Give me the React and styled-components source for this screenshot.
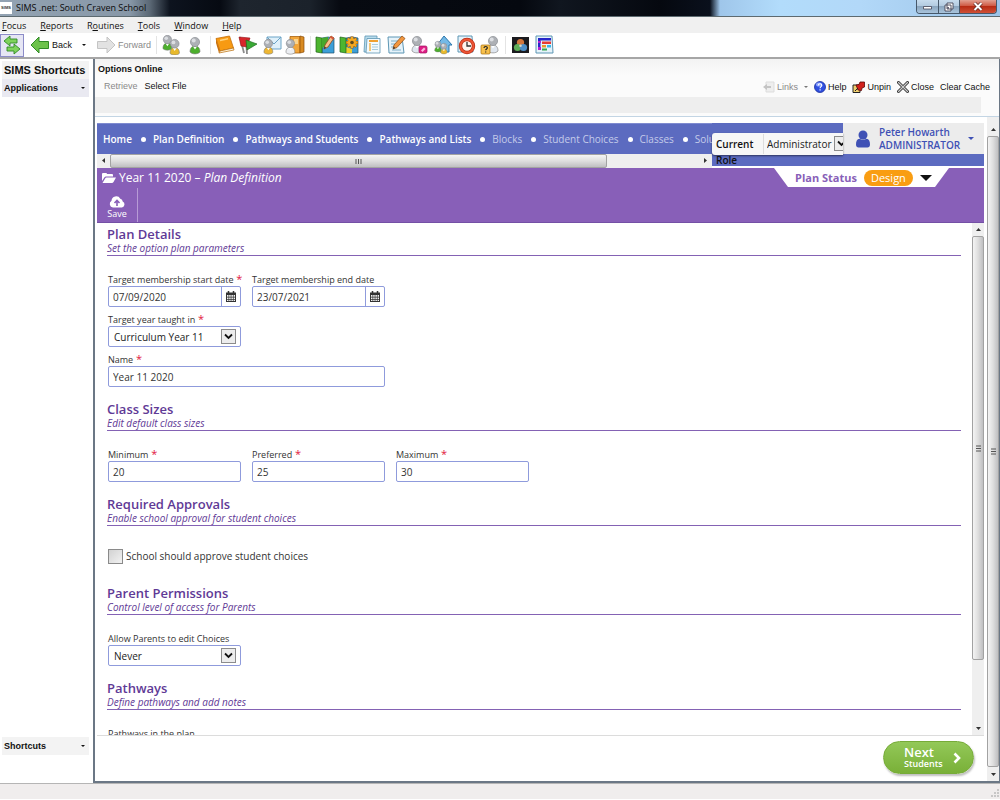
import React from "react";
import styled, { createGlobalStyle, css } from "styled-components";

const GlobalStyle = createGlobalStyle`
  *, *::before, *::after { box-sizing: border-box; }
  html, body { margin: 0; padding: 0; background: #fff; }
  button, input, select { font: inherit; color: inherit; margin: 0; }
  button { background: none; border: 0; padding: 0; cursor: pointer; }
  h1, h2, p { margin: 0; font-weight: inherit; font-size: inherit; }
  svg { flex: none; }
`;

const purple = "#885fb8";
const heading = "#5f3a96";
const indigo = "#5c6bc0";

const Window = styled.div`
  display: flex;
  flex-direction: column;
  height: 100vh;
  min-height: 480px;
  overflow: hidden;
  font: 9px/12px "Liberation Sans", Arial, sans-serif;
  color: #111;
`;

/* Window chrome */
const TitleBar = styled.header`
  display: flex;
  align-items: center;
  flex: none;
  height: 17px;
  padding-right: 3px;
  border-bottom: 1px solid #5d6a70;
  background: linear-gradient(90deg, #93a3b3 0, #8797a7 130px, #5b6875 150px, #0d131e 170px, #060a12 220px, #1e252e 240px, #1b222b 310px, #070a11 340px, #05080f 52%, #10161f 56%, #05080f 66%, #0a101c 71%, #9fc6ea 72%, #b2dcfb 78%, #b2d8f8 86%, #9dc4e8 100%);
`;
const AppBadge = styled.span`
  width: 12px;
  height: 12px;
  background: #fff;
  color: #333;
  font-size: 4px;
  line-height: 12px;
  font-weight: bold;
  text-align: center;
`;
const WindowTitle = styled.h1`
  flex: 1;
  padding-left: 4px;
  font: 9px/14px "Open Sans", sans-serif;
  color: #0a0a0a;
`;
const WindowButtons = styled.div`
  display: flex;
  align-self: flex-start;
  height: 14px;
  border: 1px solid #46586a;
  border-top: 0;
  border-radius: 0 0 4px 4px;
  overflow: hidden;
`;
const WindowButton = styled.button`
  display: grid;
  place-items: center;
  width: ${(p) => (p.$close ? 37 : 21)}px;
  background: ${(p) =>
    p.$close
      ? "linear-gradient(#e2a091, #cf5a44 45%, #b82c14 50%, #cf5037)"
      : "linear-gradient(#c7dcee, #b3cbe0 45%, #8ba6bf 50%, #a9c4dc)"};
  &:not(:first-child) { border-left: 1px solid #46586a; }
`;
const MenuBar = styled.nav`
  display: flex;
  flex: none;
  height: 16px;
  padding-left: 2px;
  gap: 14px;
  background: #f0f0f0;
`;
const MenuItem = styled.button`
  line-height: 17px;
  font-family: "Open Sans", sans-serif;
`;
const Toolbar = styled.div`
  display: flex;
  align-items: center;
  flex: none;
  height: 26px;
  border-bottom: 2px solid #a6a6a6;
  background: #fff;
`;
const ToolButton = styled.button`
  display: flex;
  align-items: center;
  flex: none;
  gap: 2px;
  color: ${(p) => (p.$muted ? "#8a8a8a" : "#111")};
  svg { display: block; }
`;
const ToggleButton = styled(ToolButton)`
  justify-content: center;
  width: 24px;
  height: 23px;
  margin-right: 6px;
  border: 1px solid #8c8cc8;
  background: #e6e6f4;
`;
const CaretButton = styled(ToolButton)`
  justify-content: center;
  width: 24px;
`;
const IconGroup = styled.div`
  display: flex;
  justify-content: space-between;
  flex: none;
  width: ${(p) => p.$width}px;
`;
const Divider = styled.span`
  flex: none;
  width: 1px;
  height: 18px;
  margin: 0 4px 0 5px;
  background: #e4e4e4;
`;
const Caret = styled.span`
  display: inline-block;
  flex: none;
  border: solid transparent;
  border-width: ${(p) => p.$size || 2}px ${(p) => p.$size || 2}px 0;
  border-top-color: ${(p) => p.$color || "#111"};
`;

/* Sidebar and workspace */
const Body = styled.div`
  display: flex;
  flex: 1;
  min-height: 0;
`;
const Sidebar = styled.aside`
  display: flex;
  flex-direction: column;
  flex: none;
  width: 93px;
  padding: 2px 4px 28px 2px;
`;
const SidebarTitle = styled.h2`
  height: 18px;
  padding-left: 2px;
  background: #f3f3f3;
  font-size: 11px;
  line-height: 19px;
  font-weight: bold;
  white-space: nowrap;
`;
const SidebarButton = styled.button`
  display: flex;
  align-items: center;
  justify-content: space-between;
  height: 18px;
  padding: 0 4px 0 2px;
  background: ${(p) => (p.$active ? "#e9e9f1" : "#f3f3f3")};
  font-weight: bold;
  ${(p) => p.$last && css`margin-top: auto;`}
`;
const Workspace = styled.main`
  display: flex;
  flex-direction: column;
  flex: 1;
  min-width: 0;
  border-left: 2px solid #6b7785;
  border-bottom: 2px solid #6b7785;
  border-right: 1px solid #6b7785;
`;
const WorkspaceHead = styled.div`
  flex: none;
  padding: 4px 9px 0 3px;
  height: 58px;
  background: linear-gradient(#f3f3f3, #fbfbfb 16px);
  border-bottom: 1px solid #c3d5e4;
`;
const WorkspaceTitle = styled.h2`
  font-weight: bold;
`;
const Actions = styled.div`
  display: flex;
  align-items: center;
  height: 22px;
  padding-left: 6px;
  gap: 7px;
`;
const ActionsEnd = styled.div`
  display: flex;
  align-items: center;
  gap: 6px;
  margin-left: auto;
  padding-top: 2px;
`;
const GreyBand = styled.div`
  height: 16px;
  margin: 0 9px 0 -3px;
  background: #eee;
`;
const Browser = styled.div`
  display: flex;
  flex: 1;
  min-height: 0;
`;
const Page = styled.div`
  display: flex;
  flex-direction: column;
  flex: 1;
  min-width: 0;
  margin: 6px 3px 2px 2px;
  font-family: "Open Sans", sans-serif;
`;

/* Scroll bars */
const Track = styled.div`
  display: flex;
  flex: none;
  flex-direction: ${(p) => (p.$across ? "row" : "column")};
  align-items: stretch;
  ${(p) => (p.$across ? "height: 14px;" : "width: 12px;")}
  padding-top: ${(p) => (p.$inset ? 6 : 0)}px;
  background: #efefef;
`;
const TrackEnd = styled.span`
  display: grid;
  place-items: center;
  flex: none;
  width: 13px;
  height: 13px;
`;
const Thumb = styled.span`
  display: grid;
  place-items: center;
  flex: ${(p) => p.$share} 1 0;
  border: 1px solid #a2a2a2;
  border-radius: 2px;
  background: linear-gradient(${(p) => (p.$across ? "180deg" : "90deg")}, #f4f4f4, #dedede 50%, #bfbfc1);
`;
const Spare = styled.span`
  flex: ${(p) => p.$share} 1 0;
`;

/* Page header */
const PageHead = styled.div`
  display: flex;
  flex: none;
  height: 45px;
`;
const NavSide = styled.div`
  flex: 1;
  min-width: 0;
`;
const NavList = styled.nav`
  display: flex;
  align-items: center;
  height: 31px;
  padding-left: 6px;
  overflow: hidden;
  background: ${indigo};
  border-top: 1px solid #7f8bd0;
`;
const NavLink = styled.a`
  flex: none;
  color: ${(p) => (p.$dim ? "#c5cbea" : "#fff")};
  font-size: 10px;
  line-height: 16px;
  font-weight: ${(p) => (p.$dim ? 400 : 600)};
  text-decoration: none;
  white-space: nowrap;
  &:not(:first-child)::before {
    content: "";
    display: inline-block;
    width: 5px;
    height: 5px;
    margin: 0 7px 1px 9px;
    border-radius: 50%;
    background: #fff;
  }
`;
const UserSide = styled.div`
  position: relative;
  display: flex;
  flex-direction: column;
  flex: none;
  width: 272px;
  height: 43px;
  background: ${indigo};
`;
const UserMenu = styled.button`
  display: flex;
  align-items: center;
  align-self: flex-end;
  width: 141px;
  height: 31px;
  padding: 0 11px 0 12px;
  gap: 8px;
  background: #ececec;
  color: #3f51b5;
  font-size: 10px;
  line-height: 13px;
  font-weight: 600;
  text-align: left;
  white-space: nowrap;
`;
const UserName = styled.span`
  flex: 1;
`;
const RoleCard = styled.div`
  position: absolute;
  top: 10px;
  left: 0;
  display: flex;
  align-items: center;
  width: 131px;
  height: 22px;
  padding-left: 4px;
  overflow: hidden;
  border-radius: 3px 0 0 3px;
  background: #f7f7f7;
  box-shadow: 0 1px 2px rgba(0, 0, 0, 0.5);
  color: #111;
  font-size: 10px;
`;
const RoleLabel = styled.label`
  flex: none;
  width: 47px;
  font-weight: 600;
`;
const RoleWord = styled.span`
  padding-left: 4px;
  color: #111;
  font-size: 10px;
  line-height: 12px;
  font-weight: 600;
`;

/* Plan banner */
const Banner = styled.div`
  display: flex;
  justify-content: space-between;
  flex: none;
  height: 55px;
  border-bottom: 1px solid #7450a5;
  background: ${purple};
  color: #fff;
`;
const BannerTitle = styled.h2`
  display: flex;
  align-items: center;
  height: 20px;
  padding-left: 5px;
  gap: 3px;
  font-size: 12px;
  line-height: 20px;
  white-space: pre;
`;
const SaveButton = styled.button`
  display: flex;
  flex-direction: column;
  align-items: center;
  width: 41px;
  height: 34px;
  padding-top: 7px;
  border-right: 1px solid #b79bd6;
  font-size: 9px;
  line-height: 12px;
`;
const PlanStatus = styled.div`
  display: flex;
  align-items: center;
  width: 175px;
  height: 19px;
  margin-right: 35px;
  padding-left: 21px;
  gap: 7px;
  clip-path: polygon(0 0, 100% 0, 161px 100%, 14px 100%);
  background: #fff;
  color: ${purple};
  font-size: 11px;
  line-height: 16px;
  font-weight: 700;
  white-space: nowrap;
`;
const StatusPill = styled.span`
  padding: 0 7px;
  border-radius: 8px;
  background: #f99d12;
  color: #fff;
  font-weight: 400;
`;

/* Form */
const Scroller = styled.div`
  display: flex;
  flex: 1;
  min-height: 0;
`;
const Form = styled.form`
  flex: 1;
  min-width: 0;
  padding: 3px 11px 0 10px;
  overflow-y: auto;
  scrollbar-width: none;
  background: #fff;
`;
const SectionHead = styled.div`
  height: 30px;
  border-bottom: 1px solid #8462b4;
  color: ${heading};
`;
const SectionTitle = styled.h2`
  font-size: 13px;
  line-height: 16px;
  font-weight: 600;
`;
const SectionNote = styled.p`
  font-size: 10px;
  line-height: 13px;
  font-style: italic;
`;
const SectionBody = styled.div`
  display: flex;
  flex-direction: column;
  gap: 7px;
  padding: 18px 1px 14px;
`;
const FieldRow = styled.div`
  display: flex;
  gap: 11px;
`;
const FieldBox = styled.div`
  width: ${(p) => (p.$wide ? 277 : 133)}px;
  color: #333;
`;
const FieldLabel = styled.label`
  display: block;
  font-size: 9px;
  line-height: 12px;
  white-space: nowrap;
`;
const Star = styled.span`
  color: #e2173d;
  font-size: 11px;
  line-height: 8px;
`;
const Control = styled.div`
  position: relative;
  display: flex;
  height: 21px;
  border: 1px solid #8f9bdc;
  border-radius: 2px;
  background: #fff;
`;
const TextInput = styled.input`
  flex: 1;
  width: 100%;
  min-width: 0;
  padding: 0 4px;
  border: 0;
  outline: 0;
  background: transparent;
  color: #333;
  font-size: 10px;
`;
const DateButton = styled.button`
  display: grid;
  place-items: center;
  width: 19px;
  border-left: 1px solid #8f9bdc;
`;
const SelectInput = styled.select`
  flex: 1;
  width: 100%;
  padding: 0 ${(p) => (p.$small ? 3 : 5)}px;
  border: 0;
  outline: 0;
  appearance: none;
  background: transparent;
  color: #222;
  font-size: 10px;
`;
const SelectArrow = styled.span`
  position: absolute;
  right: 4px;
  top: 2px;
  display: grid;
  place-items: center;
  width: 15px;
  height: 15px;
  border: 1px solid #8c8c8c;
  background: #ededed;
  pointer-events: none;
`;
const RoleControl = styled.div`
  position: relative;
  display: flex;
  flex: none;
  width: 90px;
  height: 20px;
  border-left: 1px solid #ddd;
`;
const CheckRow = styled.label`
  display: flex;
  align-items: center;
  gap: 3px;
  height: 27px;
  padding-bottom: 3px;
  color: #333;
  font-size: 10px;
  line-height: 15px;
`;
const CheckBox = styled.input`
  appearance: none;
  width: 15px;
  height: 15px;
  border: 1px solid #8a8a8a;
  background: linear-gradient(135deg, #d2d2d2, #f2f2f2);
`;
const Footer = styled.footer`
  display: flex;
  justify-content: flex-end;
  flex: none;
  height: 44px;
  padding: 5px 10px 0 0;
  border-top: 1px solid #dcdcdc;
`;
const NextButton = styled.button`
  display: flex;
  align-items: center;
  justify-content: space-between;
  width: 91px;
  height: 33px;
  padding: 0 12px 0 20px;
  border: 1px solid #76ab38;
  border-radius: 17px;
  background: linear-gradient(#93c858, #79b038);
  box-shadow: 1px 2px 2px rgba(0, 0, 0, 0.25);
  color: #fff;
  font-size: 9px;
  line-height: 10px;
  font-weight: 600;
  text-align: left;
`;
const NextWord = styled.span`
  display: block;
  font-size: 13px;
  line-height: 13px;
`;
const StatusBar = styled.footer`
  display: flex;
  justify-content: flex-end;
  align-items: flex-end;
  flex: none;
  height: 17px;
  border-top: 1px solid #b5b5b5;
  border-bottom: 1px solid #fff;
  background: #f0eded;
`;

/* Icons */
const Icon = ({ w = 20, h = 20, box = "0 0 20 20", children }) => (
  <svg width={w} height={h} viewBox={box} aria-hidden="true">{children}</svg>
);
const Person = ({ x = 0, y = 0, body = "#4caf2c", s = 1 }) => (
  <g transform={`translate(${x} ${y}) scale(${s})`}>
    <path d="M1 15c0-4 2-6 5-6s5 2 5 6c-2 2.500-8 2.500-10 0z" fill={body} stroke="#777" strokeWidth=".6" />
    <path d="M4 9.500l2 3 2-3z" fill="#fff" />
    <circle cx="6" cy="5" r="4.600" fill="#adb0b5" stroke="#80838a" strokeWidth=".6" />
    <circle cx="4.700" cy="3.600" r="2" fill="#dcdee2" />
  </g>
);
const ShuffleIcon = () => (
  <Icon>
    <path d="M2 6l6-5v3h7v4H8v3z" fill="#7fd35c" stroke="#2f8a25" strokeWidth=".9" strokeLinejoin="round" />
    <path d="M18 14l-6-5v3H5v4h7v3z" fill="#7fd35c" stroke="#2f8a25" strokeWidth=".9" strokeLinejoin="round" />
  </Icon>
);
const ArrowIcon = ({ fill, stroke, flip }) => (
  <Icon>
    <path transform={flip ? "translate(20 0) scale(-1 1)" : undefined} d="M1 10l8-8v4.500h9.500v7H9V18z" fill={fill} stroke={stroke} strokeLinejoin="round" />
  </Icon>
);
const PeopleIcon = () => <Icon><Person x={1} y={0} s={0.9} /><Person x={8} y={4} s={0.95} body="#e8b92c" /></Icon>;
const PersonIcon = () => <Icon><Person x={4} y={2} /></Icon>;
const BookIcon = () => (
  <Icon>
    <path d="M1 3.500L14.500 1l4 12L5 16z" fill="#f79a12" stroke="#c56f08" strokeWidth=".8" />
    <path d="M1 3.500l4 12.500-1 2L1 8z" fill="#c9700a" />
    <path d="M4 18l1-2 13.500-3 .5 2z" fill="#fff3d8" stroke="#b86a08" strokeWidth=".7" />
    <path d="M5 5.500l8-1.700" stroke="#ffd27a" strokeWidth="1.500" />
  </Icon>
);
const FlagsIcon = () => (
  <Icon>
    <path d="M2 2l4 16M8 5l1 14" stroke="#8b8b8b" strokeWidth="1.800" />
    <path d="M1 2l11 1-3 9-6-1z" fill="#d7262b" stroke="#8d1216" strokeWidth=".6" />
    <path d="M8 5l11 4-10 6z" fill="#39a935" stroke="#1d6b1b" strokeWidth=".7" />
  </Icon>
);
const MailPersonIcon = () => (
  <Icon>
    <path d="M5 2h14v12H5z" fill="#dff0fa" stroke="#6ba3c6" />
    <path d="M5 2l7 7 7-7" fill="none" stroke="#6ba3c6" />
    <Person x={1} y={4} body="#efb733" s={0.9} />
  </Icon>
);
const DoorPersonIcon = () => (
  <Icon>
    <path d="M5 1.500h10V18H5z" fill="#f2a63a" stroke="#a9620e" strokeWidth=".8" />
    <path d="M15 1l4 1v15l-4 1z" fill="#d98b22" stroke="#8a4c08" strokeWidth=".7" />
    <path d="M9 4h4v5H9z" fill="#fbd48d" />
    <Person x={0} y={4} body="#eceef2" s={0.9} />
  </Icon>
);
const MapPencilIcon = () => (
  <Icon>
    <path d="M7 3l6-1 6 1v15H7z" fill="#3c9fd8" stroke="#20506e" strokeWidth=".7" />
    <path d="M1 2l6 1v15l-6-1z" fill="#4db52f" stroke="#20631a" strokeWidth=".7" />
    <path d="M7 3l6-1v8l-6 3z" fill="#46a82c" />
    <path d="M9 14l1-4 6-9 3 2-6 9z" fill="#f8c08a" stroke="#8c4a1c" strokeWidth=".8" />
    <path d="M16 1l3 2-1 1.600-3-2z" fill="#d9553b" />
    <path d="M9 14l.6-2.400 1.600 1.200z" fill="#333" />
  </Icon>
);
const MapGearIcon = () => (
  <Icon>
    <path d="M7 3l6-1 6 1v15H7z" fill="#3c9fd8" stroke="#20506e" strokeWidth=".7" />
    <path d="M7 12l6 2v4H7z" fill="#f0cf2c" />
    <path d="M1 2l6 1v15l-6-1z" fill="#4db52f" stroke="#20631a" strokeWidth=".7" />
    <path d="M13 1.500v12M7 7.500h12M8.700 3.300l8.600 8.400M17.300 3.300l-8.600 8.400" stroke="#a86208" strokeWidth="3" />
    <path d="M13 2v11M7.500 7.500h11M9 3.600l8 7.800M17 3.600l-8 7.800" stroke="#f5a821" strokeWidth="2" />
    <circle cx="13" cy="7.500" r="4" fill="#f5a821" />
    <circle cx="13" cy="7.500" r="1.800" fill="#5d4a20" />
  </Icon>
);
const ListIcon = () => (
  <Icon>
    <path d="M3 1h12v13l-2 3H2z" fill="#b8dcec" stroke="#5d96b4" strokeWidth=".8" />
    <path d="M5 3.500h13V18H4z" fill="#f3fafd" stroke="#5d96b4" strokeWidth=".8" />
    <path d="M7 6h9" stroke="#f0a030" strokeWidth="2" />
    <path d="M7 8v8h2V8z" fill="#f3c77c" />
    <path d="M10 9.500h6M10 12h6M10 14.500h6" stroke="#a9cbdc" />
  </Icon>
);
const NotePencilIcon = () => (
  <Icon>
    <path d="M2 2h14l2 16H3z" fill="#e6f3fa" stroke="#5d96b4" />
    <path d="M5 6h8M5 9h6M5 12h5M6 15h9" stroke="#7fb0ca" />
    <path d="M7 14l1-4 8-9 3 2.500-8 9z" fill="#f2973f" stroke="#94531a" strokeWidth=".8" />
    <path d="M7 14l.7-2.400 1.700 1.300z" fill="#333" />
  </Icon>
);
const PersonPinkIcon = () => (
  <Icon>
    <Person x={2} y={1} body="#dfe6ef" />
    <rect x="10" y="11" width="8" height="7" rx="1.500" fill="#df1f86" stroke="#9c0f5b" strokeWidth=".7" />
    <path d="M12 15.500l3-3 1.500 1.500-3 3z" fill="#ffb8de" />
  </Icon>
);
const HouseIcon = () => (
  <Icon>
    <path d="M11 1l8 9h-3v7H7v-7H4z" fill="#74b9e6" stroke="#2d77ac" />
    <Person x={1} y={6} s={0.65} />
    <Person x={7} y={8} s={0.65} body="#e8b92c" />
  </Icon>
);
const ClockIcon = () => (
  <Icon>
    <path d="M2 1h14l1 16H2z" fill="#e6f3fa" stroke="#5d96b4" />
    <circle cx="11" cy="11" r="6.500" fill="#fff4ec" stroke="#b82d14" strokeWidth="3.400" />
    <circle cx="11" cy="11" r="6.500" fill="none" stroke="#ee5535" strokeWidth="2" />
    <path d="M11 7v4h4" fill="none" stroke="#333" strokeWidth="1.300" />
  </Icon>
);
const PersonQueryIcon = () => (
  <Icon>
    <Person x={7} y={1} body="#dfe6ef" />
    <rect x="1" y="10" width="9" height="9" rx="1" fill="#f8c04c" stroke="#a86e0a" strokeWidth=".7" />
    <path d="M4 13c0-2 3.500-2 3.300 0 0 1-1.600 1-1.600 2.300M5.700 16.600v1" fill="none" stroke="#222" strokeWidth="1.200" />
  </Icon>
);
const LightsIcon = () => (
  <Icon>
    <path d="M2 2h17v16H2z" fill="#1b1b1f" />
    <circle cx="10.500" cy="7.500" r="3.600" fill="#d3773e" />
    <circle cx="7.500" cy="12.500" r="3.600" fill="#5fae59" />
    <circle cx="13.500" cy="12.500" r="3.600" fill="#4e8fc9" />
    <circle cx="10.500" cy="10.800" r="1.300" fill="#d8d8c8" />
  </Icon>
);
const TimetableIcon = () => (
  <Icon>
    <path d="M2 1h16l1 17H2z" fill="#e6f3fa" stroke="#5d96b4" />
    <path d="M4 3h13v2.500H4zM4 3h2.500v12H4z" fill="#2526c9" />
    <path d="M4 6h3v2H4zM4 12h3v3H4z" fill="#b81fd0" />
    <path d="M8 6.500h9V9H8z" fill="#e63b34" />
    <path d="M8 10h4v2.500H8z" fill="#e89a2c" />
    <path d="M13 10h4v2.500h-4z" fill="#39b7ea" />
    <path d="M8 13.500h5v2H8z" fill="#34a853" />
  </Icon>
);
const LinksIcon = () => (
  <Icon w={12} h={12} box="0 0 12 12">
    <path d="M3 1h8v10H3z" fill="#eee" stroke="#ddd" />
    <path d="M0 6l4-3v2h4v2H4v2z" fill="#c4c4c4" />
  </Icon>
);
const HelpIcon = () => (
  <Icon w={12} h={12} box="0 0 12 12">
    <circle cx="6" cy="6" r="5.500" fill="#2f4fe0" stroke="#1b2f9c" strokeWidth=".8" />
    <ellipse cx="5" cy="3.500" rx="3" ry="2" fill="#8ea4ff" />
    <path d="M4.300 4.500c0-2.300 3.500-2.300 3.500-.2 0 1.400-1.700 1.300-1.700 2.900M6.100 8.300v1.300" fill="none" stroke="#fff" strokeWidth="1.200" />
  </Icon>
);
const UnpinIcon = () => (
  <Icon w={13} h={12} box="0 0 13 12">
    <path d="M1 4h7v7.500H1z" fill="#f0d070" stroke="#222" />
    <path d="M4 4l3-.5L8 1h4.500v5L10 7 9.500 9.500 6 9z" fill="#d1201b" stroke="#5c0a08" strokeWidth=".8" />
    <path d="M6 7l-3 3" stroke="#222" />
  </Icon>
);
const CrossIcon = () => (
  <Icon w={12} h={12} box="0 0 12 12">
    <path d="M1.500 1.500l9 9M10.500 1.500l-9 9" stroke="#333" strokeWidth="3" strokeLinecap="round" />
    <path d="M1.500 1.500l9 9M10.500 1.500l-9 9" stroke="#ccc" strokeWidth="1.200" strokeLinecap="round" />
  </Icon>
);
const UserIcon = () => (
  <Icon w={16} h={18} box="0 0 16 18">
    <circle cx="8" cy="5" r="4.500" fill="#3f51b5" />
    <path d="M1 14.500C1 11 2 9 4.500 8.700c2 1.500 5 1.500 7 0C14 9 15 11 15 14.500c0 2-1 3-2.500 3h-9c-1.500 0-2.500-1-2.500-3z" fill="#3f51b5" />
  </Icon>
);
const FolderIcon = () => (
  <Icon w={14} h={12} box="0 0 14 12">
    <path d="M0 9V2q0-1 1-1h3q1 0 1 1h5q1 0 1 1v1.500H4Q3 4.500 2.500 5.300z" fill="#fff" />
    <path d="M.5 11l2.800-4.800Q3.600 5.500 4.500 5.500H14L11.500 10q-.6 1-1.500 1z" fill="#fff" />
  </Icon>
);
const CloudIcon = () => (
  <Icon w={16} h={13} box="0 0 16 13">
    <path d="M4 12.500A3.700 3.700 0 0 1 2.500 5.700 4.700 4.700 0 0 1 11.300 3.700 3 3 0 0 1 13.700 6.500 3.200 3.200 0 0 1 13 12.500z" fill="#fff" />
    <path d="M8 11V6M5.500 8L8 5.500 10.500 8" fill="none" stroke={purple} strokeWidth="1.600" />
  </Icon>
);
const CalendarIcon = () => (
  <Icon w={10} h={11} box="0 0 10 11">
    <path d="M0 1.500h10V11H0z" fill="#333" />
    <path d="M2.500 0v3M7.500 0v3" stroke="#333" strokeWidth="1.500" />
    <path d="M1 4h1.500v1.700H1zM3.200 4h1.500v1.700H3.200zM5.400 4h1.500v1.700H5.400zM7.600 4H9v1.700H7.600zM1 6.400h1.500V8H1zM3.200 6.400h1.500V8H3.200zM5.400 6.400h1.500V8H5.400zM7.600 6.400H9V8H7.600zM1 8.700h1.500v1.400H1zM3.200 8.700h1.500v1.400H3.200zM5.400 8.700h1.500v1.400H5.400zM7.600 8.700H9v1.400H7.600z" fill="#f4f4f4" />
  </Icon>
);
const ChevronDown = () => (
  <Icon w={9} h={7} box="0 0 9 7"><path d="M1 1.500l3.500 3.500L8 1.500" fill="none" stroke="#111" strokeWidth="1.800" /></Icon>
);
const ChevronRight = () => (
  <Icon w={8} h={12} box="0 0 8 12"><path d="M1.500 1.500L6 6l-4.500 4.500" fill="none" stroke="#fff" strokeWidth="2.600" /></Icon>
);
const Pointer = ({ turn = 0 }) => (
  <Icon w={5} h={5} box="0 0 5 5"><path transform={`rotate(${turn} 2.5 2.5)`} d="M0 4l2.500-3L5 4z" fill="#333" /></Icon>
);
const Grip = ({ across }) => (
  <Icon w={7} h={7} box="0 0 7 7"><path d={across ? "M1 1v5M3.500 1v5M6 1v5" : "M1 1h5M1 3.500h5M1 6h5"} stroke="#555" /></Icon>
);

const ScrollBar = ({ across, inset, thumb, spare }) => (
  <Track $across={across} $inset={inset} aria-hidden="true">
    <TrackEnd><Pointer turn={across ? -90 : 0} /></TrackEnd>
    <Thumb $across={across} $share={thumb}><Grip across={across} /></Thumb>
    <Spare $share={spare} />
    <TrackEnd><Pointer turn={across ? 90 : 180} /></TrackEnd>
  </Track>
);

const Field = ({ id, label, required, wide, children }) => (
  <FieldBox $wide={wide}>
    <FieldLabel htmlFor={id}>{label}{required && <Star> *</Star>}</FieldLabel>
    <Control>{children}</Control>
  </FieldBox>
);
const TextField = ({ id, value, ...rest }) => (
  <Field id={id} {...rest}><TextInput id={id} defaultValue={value} /></Field>
);
const DateField = ({ id, value, ...rest }) => (
  <Field id={id} {...rest}>
    <TextInput id={id} defaultValue={value} />
    <DateButton type="button" aria-label="Choose date"><CalendarIcon /></DateButton>
  </Field>
);
const SelectField = ({ id, value, ...rest }) => (
  <Field id={id} {...rest}>
    <SelectInput id={id}><option>{value}</option></SelectInput>
    <SelectArrow><ChevronDown /></SelectArrow>
  </Field>
);
const Section = ({ title, note, children }) => (
  <section>
    <SectionHead>
      <SectionTitle>{title}</SectionTitle>
      <SectionNote>{note}</SectionNote>
    </SectionHead>
    <SectionBody>{children}</SectionBody>
  </section>
);

/* Each menu: text before the access key, the key, the rest */
const menus = [["", "F", "ocus"], ["", "R", "eports"], ["R", "o", "utines"], ["", "T", "ools"], ["", "W", "indow"], ["", "H", "elp"]];
const toolGroups = [
  { width: 44, items: [["Students", PeopleIcon], ["Student", PersonIcon]] },
  { width: 90, items: [["Register", BookIcon], ["Flags", FlagsIcon], ["Messages", MailPersonIcon], ["Leavers", DoorPersonIcon]] },
  {
    width: 185,
    items: [["Edit map", MapPencilIcon], ["Map settings", MapGearIcon], ["Lists", ListIcon], ["Notes", NotePencilIcon],
      ["Profile", PersonPinkIcon], ["Promotion", HouseIcon], ["Attendance", ClockIcon], ["Enquiry", PersonQueryIcon]],
  },
  { width: 44, items: [["Options", LightsIcon], ["Timetable", TimetableIcon]] },
];
const links = [
  ["Home"], ["Plan Definition"], ["Pathways and Students"], ["Pathways and Lists"],
  ["Blocks", true], ["Student Choices", true], ["Classes", true], ["Solutions", true],
];

export default function App() {
  return (
    <Window>
      <GlobalStyle />
      <TitleBar>
        <AppBadge>SIMS</AppBadge>
        <WindowTitle>SIMS .net: South Craven School</WindowTitle>
        <WindowButtons>
          <WindowButton aria-label="Minimise">
            <Icon w={11} h={9} box="0 0 11 9"><path d="M1.500 4.500h8v2.500h-8z" fill="#fff" stroke="#445" strokeWidth=".8" /></Icon>
          </WindowButton>
          <WindowButton aria-label="Restore">
            <Icon w={10} h={10} box="0 0 10 10">
              <path d="M3 1h6v6H3zM1 3h6v6H1z" fill="#fff" stroke="#445" strokeWidth=".9" />
              <path d="M3 5h2v2H3z" fill="#667" />
            </Icon>
          </WindowButton>
          <WindowButton $close aria-label="Close window">
            <Icon w={10} h={9} box="0 0 10 9">
              <path d="M1.500 1l7 7M8.500 1l-7 7" stroke="#5a2420" strokeWidth="3.400" />
              <path d="M1.500 1l7 7M8.500 1l-7 7" stroke="#fff" strokeWidth="2" />
            </Icon>
          </WindowButton>
        </WindowButtons>
      </TitleBar>
      <MenuBar>
        {menus.map(([before, key, after]) => <MenuItem key={after}>{before}<u>{key}</u>{after}</MenuItem>)}
      </MenuBar>
      <Toolbar>
        <ToggleButton aria-label="Toggle shortcuts"><ShuffleIcon /></ToggleButton>
        <ToolButton><ArrowIcon fill="#6cc24a" stroke="#2f8a25" />Back</ToolButton>
        <CaretButton aria-label="Back history"><Caret /></CaretButton>
        <ToolButton $muted><ArrowIcon flip fill="#e2e2e2" stroke="#c4c4c4" />Forward</ToolButton>
        {toolGroups.map((g) => (
          <React.Fragment key={g.items[0][0]}>
            <Divider />
            <IconGroup $width={g.width}>
              {g.items.map(([name, Glyph]) => <ToolButton key={name} aria-label={name}><Glyph /></ToolButton>)}
            </IconGroup>
          </React.Fragment>
        ))}
      </Toolbar>
      <Body>
        <Sidebar>
          <SidebarTitle>SIMS Shortcuts</SidebarTitle>
          <SidebarButton $active>Applications<Caret /></SidebarButton>
          <SidebarButton $last>Shortcuts<Caret /></SidebarButton>
        </Sidebar>
        <Workspace>
          <WorkspaceHead>
            <WorkspaceTitle>Options Online</WorkspaceTitle>
            <Actions>
              <ToolButton $muted>Retrieve</ToolButton>
              <ToolButton>Select File</ToolButton>
              <ActionsEnd>
                <ToolButton $muted><LinksIcon />Links</ToolButton>
                <Caret $color="#777" />
                <ToolButton><HelpIcon />Help</ToolButton>
                <ToolButton><UnpinIcon />Unpin</ToolButton>
                <ToolButton><CrossIcon />Close</ToolButton>
                <ToolButton>Clear Cache</ToolButton>
              </ActionsEnd>
            </Actions>
            <GreyBand />
          </WorkspaceHead>
          <Browser>
            <Page>
              <PageHead>
                <NavSide>
                  <NavList>
                    {links.map(([text, dim]) => <NavLink key={text} href="#" $dim={dim}>{text}</NavLink>)}
                  </NavList>
                  <ScrollBar across thumb={497} spare={92} />
                </NavSide>
                <UserSide>
                  <UserMenu>
                    <UserIcon />
                    <UserName>Peter Howarth<br />ADMINISTRATOR</UserName>
                    <Caret $size={3} $color="#3f51b5" />
                  </UserMenu>
                  <RoleWord>Role</RoleWord>
                  <RoleCard>
                    <RoleLabel htmlFor="role">Current</RoleLabel>
                    <RoleControl>
                      <SelectInput id="role" $small><option>Administrator</option></SelectInput>
                      <SelectArrow><ChevronDown /></SelectArrow>
                    </RoleControl>
                  </RoleCard>
                </UserSide>
              </PageHead>
              <Banner>
                <div>
                  <BannerTitle><FolderIcon /><span>Year 11 2020 – <em>Plan Definition</em></span></BannerTitle>
                  <SaveButton><CloudIcon />Save</SaveButton>
                </div>
                <PlanStatus>Plan Status<StatusPill>Design</StatusPill><Caret $size={6} /></PlanStatus>
              </Banner>
              <Scroller>
                <Form>
                  <Section title="Plan Details" note="Set the option plan parameters">
                    <FieldRow>
                      <DateField id="start" label="Target membership start date" required value="07/09/2020" />
                      <DateField id="end" label="Target membership end date" value="23/07/2021" />
                    </FieldRow>
                    <SelectField id="year" label="Target year taught in" required value="Curriculum Year 11" />
                    <TextField id="name" label="Name" required wide value="Year 11 2020" />
                  </Section>
                  <Section title="Class Sizes" note="Edit default class sizes">
                    <FieldRow>
                      <TextField id="min" label="Minimum" required value="20" />
                      <TextField id="pref" label="Preferred" required value="25" />
                      <TextField id="max" label="Maximum" required value="30" />
                    </FieldRow>
                  </Section>
                  <Section title="Required Approvals" note="Enable school approval for student choices">
                    <CheckRow><CheckBox type="checkbox" />School should approve student choices</CheckRow>
                  </Section>
                  <Section title="Parent Permissions" note="Control level of access for Parents">
                    <SelectField id="parents" label="Allow Parents to edit Choices" value="Never" />
                  </Section>
                  <Section title="Pathways" note="Define pathways and add notes">
                    <TextField id="pathways" label="Pathways in the plan" value="" />
                  </Section>
                </Form>
                <ScrollBar thumb={424} spare={62} />
              </Scroller>
              <Footer>
                <NextButton><span><NextWord>Next</NextWord>Students</span><ChevronRight /></NextButton>
              </Footer>
            </Page>
            <ScrollBar inset thumb={632} spare={1} />
          </Browser>
        </Workspace>
      </Body>
      <StatusBar>
        <Icon w={12} h={12} box="0 0 12 12"><path d="M9 3h2M9 6h2M6 6h2M9 9h2M6 9h2M3 9h2" stroke="#bbb" strokeWidth="1.500" /></Icon>
      </StatusBar>
    </Window>
  );
}
